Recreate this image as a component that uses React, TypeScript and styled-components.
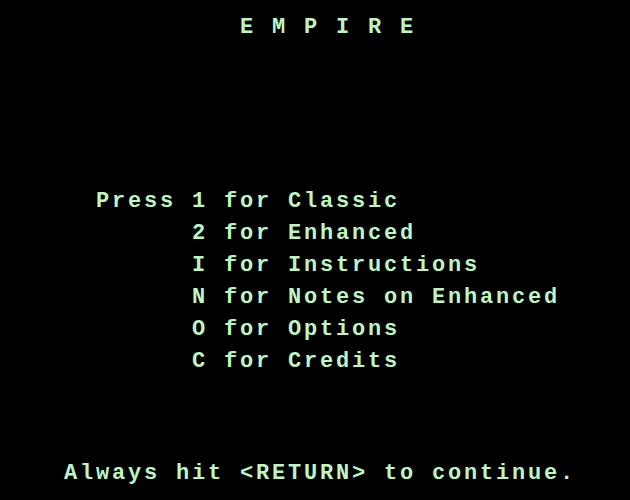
import React from 'react'
import styled, { createGlobalStyle } from 'styled-components'

const CELL = 16

const GlobalStyle = createGlobalStyle`
  html, body {
    margin: 0;
    padding: 0;
    background: #000;
  }
`

const menu = [
  { lead: 'Press', key: '1', label: 'Classic' },
  { lead: '', key: '2', label: 'Enhanced' },
  { lead: '', key: 'I', label: 'Instructions' },
  { lead: '', key: 'N', label: 'Notes on Enhanced' },
  { lead: '', key: 'O', label: 'Options' },
  { lead: '', key: 'C', label: 'Credits' },
]

const App = () => {
  return (
    <>
      <GlobalStyle />
      <Screen>
        <Line $col={15}>E M P I R E</Line>
        <Menu>
          {menu.map((item) => (
            <MenuRow key={item.key}>
              <span>{item.lead}</span>
              <span>{item.key}</span>
              <span>for</span>
              <span>{item.label}</span>
            </MenuRow>
          ))}
        </Menu>
        <Footer $col={4}>Always hit &lt;RETURN&gt; to continue.</Footer>
      </Screen>
    </>
  )
}

export default App

const Screen = styled.div`
  width: 630px;
  height: 500px;
  box-sizing: border-box;
  padding-top: 12px;
  display: flex;
  flex-direction: column;
  background: #000;
  color: #bcf5c2;
  font-family: 'Liberation Mono', 'DejaVu Sans Mono', monospace;
  font-weight: 700;
  font-size: 22px;
  line-height: 32px;
  letter-spacing: 2.8px;
  white-space: pre;
  overflow: hidden;
`

const Line = styled.div<{ $col: number }>`
  height: 32px;
  padding-left: ${(props) => props.$col * CELL}px;
`

const Menu = styled.div`
  margin-top: 142px;
  padding-left: ${6 * CELL}px;
  display: flex;
  flex-direction: column;
`

const MenuRow = styled.div`
  display: grid;
  grid-template-columns: ${6 * CELL}px ${2 * CELL}px ${4 * CELL}px auto;
  height: 32px;
`

const Footer = styled(Line)`
  margin-top: 80px;
`
